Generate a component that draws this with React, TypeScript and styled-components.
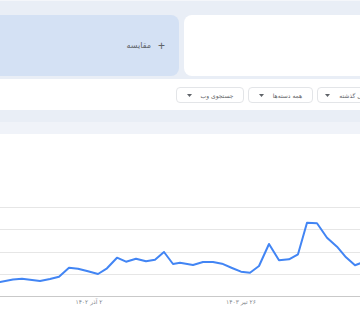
import styled, { createGlobalStyle } from 'styled-components';

const GlobalStyle = createGlobalStyle`
    html, body {
        margin: 0;
        padding: 0;
        background: #ffffff;
    }
    body {
        font-family: 'DejaVu Sans', 'Noto Sans', sans-serif;
        width: 360px;
        height: 320px;
        overflow: hidden;
    }
`;

const points: [number, number][] = [
    [0, 282], [13, 279.5], [22, 278.7], [40, 281], [50, 279], [59, 276.7],
    [69, 267.7], [78, 268.7], [88, 271.3], [98, 274], [107, 268.3], [117, 257.7],
    [126, 261.7], [136, 258.7], [146, 261.3], [155, 259.7], [164, 252], [173, 264],
    [180, 262.7], [193, 265], [203, 262], [213, 262], [222, 263.7], [232, 268],
    [241, 271.7], [250, 272.7], [259, 266], [269, 244], [279, 260.3], [289, 259.3],
    [298, 254.3], [307, 222.7], [317, 223.3], [327, 237.7], [337, 246.7], [346, 257.3],
    [355, 265.3], [362, 262.5],
];

const CHART_TOP = 134;
const gridLines = [207, 229, 252, 274];
const baseline = 296;

const filters = [
    { label: '۵ سال گذشته', width: 65 },
    { label: 'همه دسته‌ها', width: 65 },
    { label: 'جستجوی وب', width: 68 },
];

const Caret = () => (
    <svg width="5" height="3" viewBox="0 0 5 3">
        <path d="M0 0 L5 0 L2.5 3 Z" fill="#5f6368" />
    </svg>
);

export default function App() {
    const path = points
        .map(([x, y], i) => `${i === 0 ? 'M' : 'L'}${x} ${y - CHART_TOP}`)
        .join(' ');

    return (
        <Page dir="rtl">
            <GlobalStyle />
            <TermsArea>
                <TermRow>
                    <SearchCard />
                    <CompareCard>
                        <Plus>+</Plus>
                        <CompareText>مقایسه</CompareText>
                    </CompareCard>
                </TermRow>
            </TermsArea>

            <Toolbar>
                {filters.map((f) => (
                    <FilterButton key={f.label} $w={f.width}>
                        <span>{f.label}</span>
                        <Caret />
                    </FilterButton>
                ))}
            </Toolbar>

            <Band />
            <BandLight />

            <ChartArea>
                <svg width="360" height="186" viewBox="0 0 360 186">
                    {gridLines.map((y) => (
                        <line
                            key={y}
                            x1="0"
                            x2="360"
                            y1={y - CHART_TOP + 0.5}
                            y2={y - CHART_TOP + 0.5}
                            stroke="#e6e6e6"
                            strokeWidth="1"
                        />
                    ))}
                    <line
                        x1="0"
                        x2="360"
                        y1={baseline - CHART_TOP + 0.5}
                        y2={baseline - CHART_TOP + 0.5}
                        stroke="#c9c9c9"
                        strokeWidth="1"
                    />
                    <path
                        d={path}
                        fill="none"
                        stroke="#4285f4"
                        strokeWidth="2"
                        strokeLinejoin="round"
                        strokeLinecap="round"
                    />
                    <AxisLabel x="89" y={baseline - CHART_TOP + 8} textAnchor="middle" direction="rtl">
                        ۲ آذر ۱۴۰۲
                    </AxisLabel>
                    <AxisLabel x="241" y={baseline - CHART_TOP + 8} textAnchor="middle" direction="rtl">
                        ۲۶ تیر ۱۴۰۳
                    </AxisLabel>
                </svg>
            </ChartArea>
        </Page>
    );
}

const Page = styled.div`
    width: 360px;
    height: 320px;
    overflow: hidden;
    background: #ffffff;
`;

const TermsArea = styled.div`
    background: #e9eef6;
    padding: 14px 0 4px;
    border-top: 1px solid #f4f6fa;
    box-sizing: border-box;
    height: 79px;
    overflow: hidden;
`;

const TermRow = styled.div`
    display: flex;
    gap: 5px;
    margin: 0 -12px;
    height: 61px;
`;

const SearchCard = styled.div`
    flex: 1;
    background: #ffffff;
    border-radius: 8px;
`;

const CompareCard = styled.div`
    width: 191px;
    flex: none;
    background: #d4e1f4;
    border-radius: 8px;
    display: flex;
    align-items: center;
    gap: 7px;
    padding-right: 14px;
    box-sizing: border-box;
`;

const Plus = styled.span`
    font-size: 12px;
    line-height: 1;
    font-family: 'Liberation Sans', sans-serif;
    color: #5f6368;
`;

const CompareText = styled.span`
    font-size: 8px;
    color: #5f6368;
`;

const Toolbar = styled.div`
    height: 31px;
    background: #ffffff;
    display: flex;
    align-items: flex-start;
    gap: 4px;
    padding-top: 8px;
    box-sizing: border-box;
    margin-right: -22px;
`;

const FilterButton = styled.div<{ $w: number }>`
    width: ${({ $w }) => $w}px;
    height: 16px;
    flex: none;
    box-sizing: border-box;
    border: 1px solid #e3e5e8;
    border-radius: 4px;
    display: flex;
    align-items: center;
    justify-content: center;
    gap: 9px;
    font-size: 6px;
    color: #5f6368;
    white-space: nowrap;
    overflow: hidden;
`;

const Band = styled.div`
    height: 12px;
    background: #e9eef6;
`;

const BandLight = styled.div`
    height: 12px;
    background: #f0f3f9;
`;

const ChartArea = styled.div`
    height: 186px;
    background: #ffffff;
`;

const AxisLabel = styled.text`
    font-size: 6px;
    fill: #80868b;
    font-family: 'DejaVu Sans', sans-serif;
`;
